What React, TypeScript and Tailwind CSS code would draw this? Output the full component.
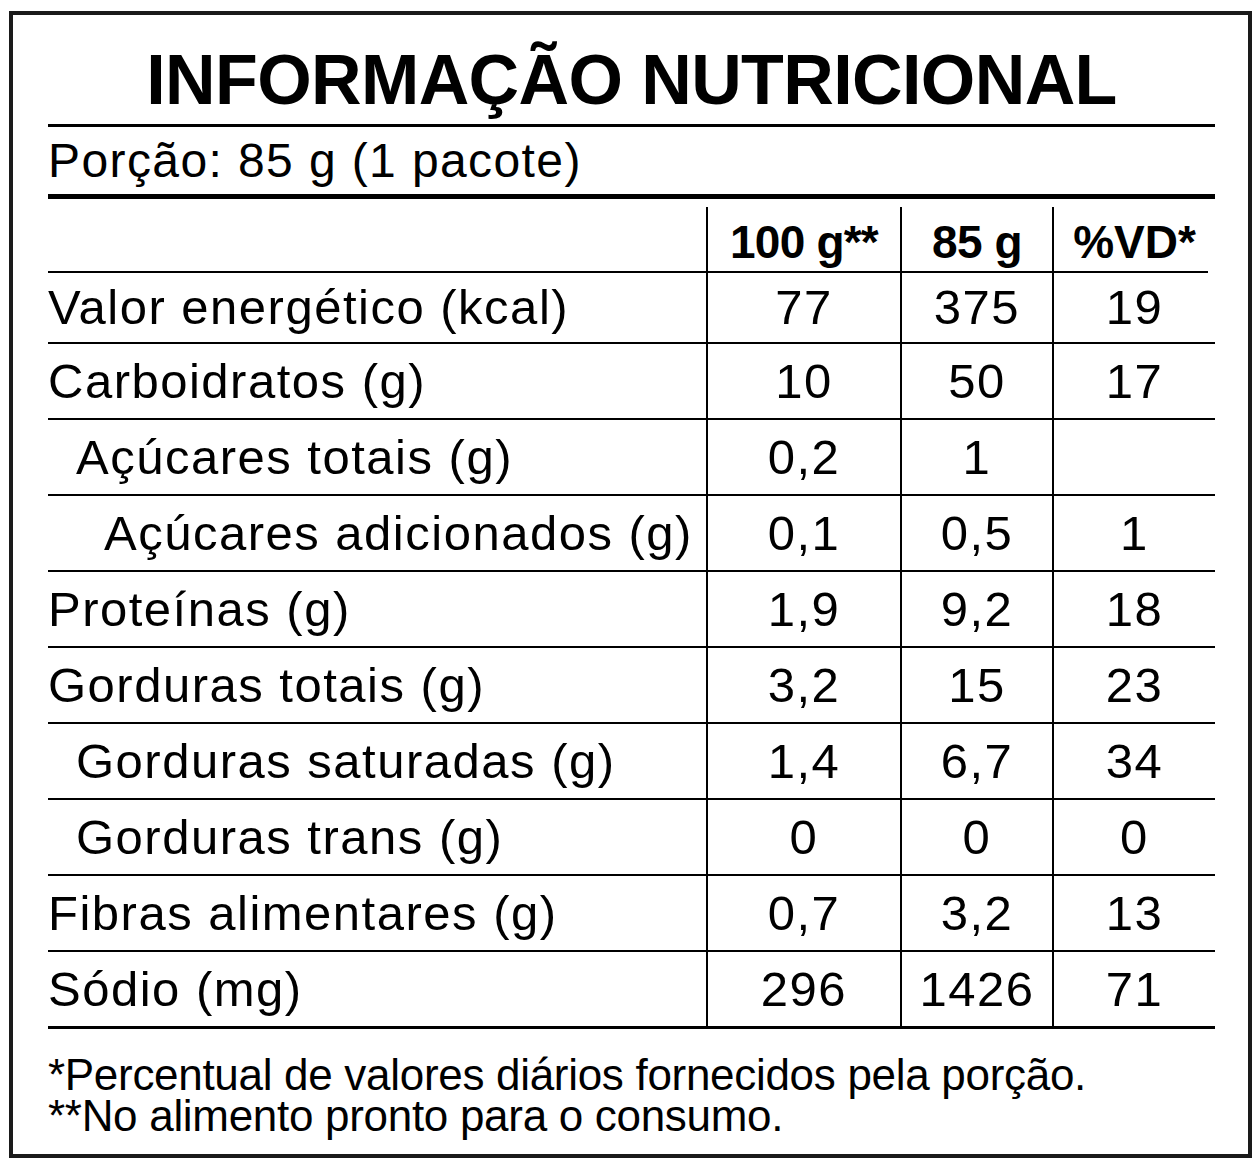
const rows = [
  { label: 'Valor energético (kcal)', pad: 'pl-0', h: 'h-[71px]', a: '77', b: '375', c: '19' },
  { label: 'Carboidratos (g)', pad: 'pl-0', h: 'h-[76px]', a: '10', b: '50', c: '17' },
  { label: 'Açúcares totais (g)', pad: 'pl-[28px]', h: 'h-[76px]', a: '0,2', b: '1', c: '' },
  { label: 'Açúcares adicionados (g)', pad: 'pl-[56px]', h: 'h-[76px]', a: '0,1', b: '0,5', c: '1' },
  { label: 'Proteínas (g)', pad: 'pl-0', h: 'h-[76px]', a: '1,9', b: '9,2', c: '18' },
  { label: 'Gorduras totais (g)', pad: 'pl-0', h: 'h-[76px]', a: '3,2', b: '15', c: '23' },
  { label: 'Gorduras saturadas (g)', pad: 'pl-[28px]', h: 'h-[76px]', a: '1,4', b: '6,7', c: '34' },
  { label: 'Gorduras trans (g)', pad: 'pl-[28px]', h: 'h-[76px]', a: '0', b: '0', c: '0' },
  { label: 'Fibras alimentares (g)', pad: 'pl-0', h: 'h-[76px]', a: '0,7', b: '3,2', c: '13' },
]

export default function App() {
  return (
    <div className="w-[1260px] h-[1172px] bg-white overflow-hidden pt-[11px] pl-[9px] font-['Liberation_Sans',Arial,sans-serif] text-black">
      <div className="w-[1243px] h-[1147px] border-4 border-[#1a1a1a] pl-[35px] pr-[33px] flex flex-col">
        {/* Title */}
        <div className="h-[109px] pt-[30px] flex justify-center">
          <h1 className="text-[70px] leading-[70px] font-bold tracking-[-0.6px]">INFORMAÇÃO NUTRICIONAL</h1>
        </div>
        <div className="h-[3px] bg-black" />

        {/* Porção */}
        <div className="h-[67px] pt-[10px] text-[48px] leading-[48px] tracking-[1.4px]">Porção: 85 g (1 pacote)</div>
        <div className="h-[5px] bg-black" />

        {/* Header */}
        <div className="pt-[8px]">
          <div className="flex h-[64px] text-[46px] leading-[46px] font-bold">
            <div className="w-[658px]" />
            <div className="w-[194px] border-l-2 border-black flex justify-center pt-[12px] tracking-[-0.8px]">100 g**</div>
            <div className="w-[152px] border-l-2 border-black flex justify-center pt-[12px] tracking-[-0.5px]">85 g</div>
            <div className="flex-1 border-l-2 border-black flex justify-center pt-[12px]">%VD*</div>
          </div>
        </div>
        <div className="h-[2px] bg-black mr-[7px]" />

        {/* Rows */}
        {rows.map((r) => (
          <div key={r.label} className={`flex border-b-2 border-black text-[49px] leading-[49px] tracking-[1.5px] ${r.h}`}>
            <div className={`w-[658px] flex items-center ${r.pad}`}>{r.label}</div>
            <div className="w-[194px] border-l-2 border-black flex items-center justify-center">{r.a}</div>
            <div className="w-[152px] border-l-2 border-black flex items-center justify-center">{r.b}</div>
            <div className="flex-1 border-l-2 border-black flex items-center justify-center">{r.c}</div>
          </div>
        ))}
        <div className="flex h-[77px] border-b-[3px] border-black text-[49px] leading-[49px] tracking-[1.5px]">
          <div className="w-[658px] flex items-center">Sódio (mg)</div>
          <div className="w-[194px] border-l-2 border-black flex items-center justify-center">296</div>
          <div className="w-[152px] border-l-2 border-black flex items-center justify-center">1426</div>
          <div className="flex-1 border-l-2 border-black flex items-center justify-center">71</div>
        </div>

        {/* Footnotes */}
        <div className="mt-[25px] text-[44px] leading-[41px] tracking-[-0.3px]">
          <p>*Percentual de valores diários fornecidos pela porção.</p>
          <p>**No alimento pronto para o consumo.</p>
        </div>
      </div>
    </div>
  )
}
